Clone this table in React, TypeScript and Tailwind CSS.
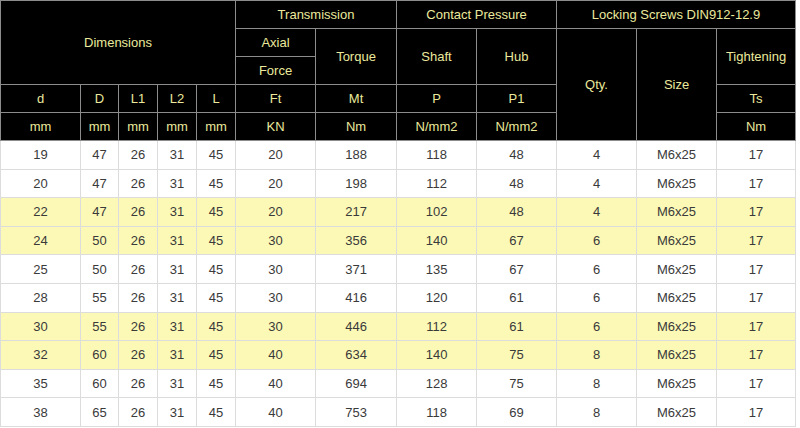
import React from "react";

const rows: (string | number)[][] = [
  [19, 47, 26, 31, 45, 20, 188, 118, 48, 4, "M6x25", 17],
  [20, 47, 26, 31, 45, 20, 198, 112, 48, 4, "M6x25", 17],
  [22, 47, 26, 31, 45, 20, 217, 102, 48, 4, "M6x25", 17],
  [24, 50, 26, 31, 45, 30, 356, 140, 67, 6, "M6x25", 17],
  [25, 50, 26, 31, 45, 30, 371, 135, 67, 6, "M6x25", 17],
  [28, 55, 26, 31, 45, 30, 416, 120, 61, 6, "M6x25", 17],
  [30, 55, 26, 31, 45, 30, 446, 112, 61, 6, "M6x25", 17],
  [32, 60, 26, 31, 45, 40, 634, 140, 75, 8, "M6x25", 17],
  [35, 60, 26, 31, 45, 40, 694, 128, 75, 8, "M6x25", 17],
  [38, 65, 26, 31, 45, 40, 753, 118, 69, 8, "M6x25", 17],
];

const yellow = new Set([2, 3, 6, 7]);
const widths = [80, 38, 39, 39, 39, 80, 81, 80, 80, 80, 80, 79];

const H = "border border-[#8c8c8c] bg-black text-[#ebe99c] text-[13px] font-normal text-center align-middle p-0 leading-none";
const D = "border border-[#dcdcdc] text-[#3a3a3a] text-[13px] text-center align-middle p-0 leading-none";

export default function App() {
  return (
    <div className="w-[800px] h-[428px] bg-white overflow-hidden" style={{ fontFamily: '"Liberation Sans", Arial, sans-serif' }}>
      <table className="table-fixed border-collapse w-[796px]">
        <colgroup>
          {widths.map((w, i) => (
            <col key={i} style={{ width: w }} />
          ))}
        </colgroup>
        <thead>
          <tr className="h-[28px]">
            <th colSpan={5} rowSpan={3} className={H}>Dimensions</th>
            <th colSpan={2} className={H}>Transmission</th>
            <th colSpan={2} className={H}>Contact Pressure</th>
            <th colSpan={3} className={H}>Locking Screws DIN912-12.9</th>
          </tr>
          <tr className="h-[28px]">
            <th className={H}>Axial</th>
            <th rowSpan={2} className={H}>Torque</th>
            <th rowSpan={2} className={H}>Shaft</th>
            <th rowSpan={2} className={H}>Hub</th>
            <th rowSpan={4} className={H}>Qty.</th>
            <th rowSpan={4} className={H}>Size</th>
            <th rowSpan={2} className={H}>Tightening</th>
          </tr>
          <tr className="h-[28px]">
            <th className={H}>Force</th>
          </tr>
          <tr className="h-[28px]">
            {["d", "D", "L1", "L2", "L", "Ft", "Mt", "P", "P1"].map((t) => (
              <th key={t} className={H}>{t}</th>
            ))}
            <th className={H}>Ts</th>
          </tr>
          <tr className="h-[28px]">
            {["mm", "mm", "mm", "mm", "mm", "KN", "Nm", "N/mm2", "N/mm2"].map((t, i) => (
              <th key={i} className={H}>{t}</th>
            ))}
            <th className={H}>Nm</th>
          </tr>
        </thead>
        <tbody>
          {rows.map((r, i) => (
            <tr key={i} className={`h-[28.6px] ${yellow.has(i) ? "bg-[#fcf9b6]" : "bg-white"}`}>
              {r.map((c, j) => (
                <td key={j} className={D}>{c}</td>
              ))}
            </tr>
          ))}
        </tbody>
      </table>
    </div>
  );
}
